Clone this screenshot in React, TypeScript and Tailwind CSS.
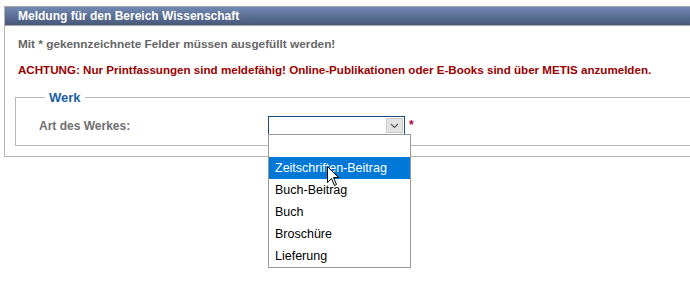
import React from "react";

const options = ["", "Zeitschriften-Beitrag", "Buch-Beitrag", "Buch", "Broschüre", "Lieferung"];

export default function App() {
  return (
    <div
      className="w-[690px] h-[289px] overflow-hidden bg-white"
      style={{ fontFamily: '"Liberation Sans", Arial, sans-serif' }}
    >
      <div className="ml-[4px] mt-[6px] w-[720px] border-l border-b border-[#b4b4b4]">
        <div className="h-[20px] border-t border-b border-[#a9a9a9] bg-gradient-to-b from-[#7189b3] to-[#48587a] pl-[13px] flex items-center text-[12px] font-bold text-white leading-none">
          Meldung für den Bereich Wissenschaft
        </div>
        <div className="pl-[10px] pt-[11px] pb-[10px]">
          <p className="pl-[3px] text-[11.8px] font-bold leading-[14px] text-[#666666]">
            Mit * gekennzeichnete Felder müssen ausgefüllt werden!
          </p>
          <p className="pl-[3px] mt-[12px] text-[11.6px] font-bold leading-[14px] text-[#990000]">
            ACHTUNG: Nur Printfassungen sind meldefähig! Online-Publikationen oder E-Books sind über METIS anzumelden.
          </p>
          <fieldset className="mt-[13px] border border-[#b9b9b9] pl-[23px] pb-[12px] h-[56px]">
            <legend className="ml-[6px] px-[4px] text-[13px] font-bold leading-[15px] text-[#1a5fa6]">
              Werk
            </legend>
            <div className="flex items-center mt-[11px]">
              <span className="w-[229px] text-[12px] font-bold text-[#707070] leading-[14px]">
                Art des Werkes:
              </span>
              <div className="relative flex items-center">
                <div className="w-[137px] h-[19px] border border-[#1c4c7c] bg-white flex justify-end items-stretch p-px">
                  <div className="w-[17px] bg-[#e3e3e3] border border-[#c9c9c9] flex items-center justify-center">
                    <svg width="9" height="6" viewBox="0 0 9 6">
                      <path d="M1 1 L4.5 4.5 L8 1" fill="none" stroke="#555" strokeWidth="1.2" />
                    </svg>
                  </div>
                </div>
                <span className="ml-[4px] text-[12px] font-bold text-[#b0003a] leading-none -mt-[2px]">*</span>
                <div className="absolute left-0 top-[18px] w-[143px] border border-[#9a9a9a] bg-white z-10">
                  {options.map((o, i) => (
                    <div
                      key={i}
                      className={
                        "h-[22px] pl-[6px] flex items-center text-[12.5px] leading-none " +
                        (i === 1 ? "bg-[#0078d7] text-white" : "text-black")
                      }
                    >
                      {o}
                    </div>
                  ))}
                  <svg
                    className="absolute left-[58px] top-[31px]"
                    width="13"
                    height="21"
                    viewBox="0 0 13 21"
                  >
                    <path
                      d="M0.5 0.5 L0.5 16.5 L4.5 12.5 L7.5 19.5 L9.5 18.5 L6.5 11.5 L11.5 11.5 Z"
                      fill="#fff"
                      stroke="#000"
                      strokeWidth="1"
                      strokeLinejoin="round"
                    />
                  </svg>
                </div>
              </div>
            </div>
          </fieldset>
        </div>
      </div>
    </div>
  );
}
